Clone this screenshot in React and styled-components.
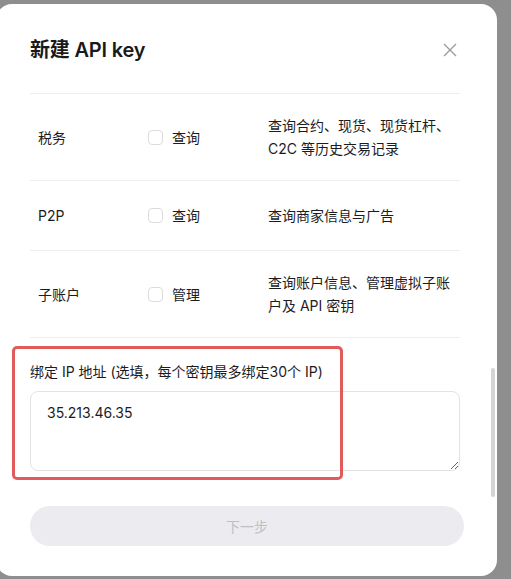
import styled, { createGlobalStyle } from "styled-components";

const GlobalStyle = createGlobalStyle`
  html, body {
    margin: 0;
    padding: 0;
    height: 100%;
    background: #8e8e8e;
    overflow: hidden;
  }
  body {
    font-family: Inter, "Noto Sans CJK SC", sans-serif;
    color: #1c1c1e;
  }
`

const Page = styled.div`
  height: 579px;
  padding-top: 4px;
  box-sizing: border-box;
`

const Modal = styled.div`
  position: relative;
  width: 501px;
  height: 572px;
  margin-left: -4px;
  box-sizing: border-box;
  padding: 0 37px 0 34px;
  background: #fff;
  border-radius: 16px;
`

const Header = styled.div`
  display: flex;
  align-items: center;
  justify-content: space-between;
  padding: 32px 0 29px;
  border-bottom: 1px solid #eeeeee;
`

const Title = styled.h2`
  margin: 0;
  font-size: 20px;
  line-height: 28px;
  font-weight: 600;
  letter-spacing: -0.2px;
  color: #1a1a1a;
`

const Close = styled.button`
  display: flex;
  margin: 0 3px 0 0;
  padding: 0;
  border: none;
  background: none;
  cursor: pointer;
`

const Row = styled.div`
  display: grid;
  grid-template-columns: 110px 120px 190px;
  align-items: center;
  min-height: 70px;
  padding: 20px 0 20px 8px;
  box-sizing: border-box;
  border-bottom: 1px solid #eeeeee;
  font-size: 14px;
  line-height: 23px;
`

const Label = styled.div`
  color: #1c1c1e;
`

const Check = styled.label`
  display: flex;
  align-items: center;
  gap: 9px;
  color: #1c1c1e;
`

const Box = styled.span`
  width: 15px;
  height: 15px;
  box-sizing: border-box;
  border: 1px solid #dcdcdf;
  border-radius: 4px;
  background: #fff;
`

const Desc = styled.div`
  color: #1c1c1e;
`

const IpSection = styled.div`
  position: relative;
  padding-top: 23px;
`

const IpLabel = styled.div`
  font-size: 14px;
  line-height: 22px;
  color: #1c1c1e;
  margin-bottom: 8px;
`

const IpInput = styled.textarea`
  display: block;
  width: 100%;
  height: 80px;
  box-sizing: border-box;
  padding: 11px 16px;
  border: 1px solid #e3e3e6;
  border-radius: 8px;
  font-family: Inter, "Noto Sans CJK SC", sans-serif;
  font-size: 14px;
  line-height: 20px;
  color: #1c1c1e;
  outline: none;
`

const Highlight = styled.div`
  position: absolute;
  left: -18px;
  top: 8px;
  width: 331px;
  height: 134px;
  box-sizing: border-box;
  border: 3px solid #e25b5b;
  border-radius: 5px;
  pointer-events: none;
`

const NextButton = styled.button`
  display: block;
  width: 434px;
  height: 40px;
  margin-top: 35px;
  border: none;
  border-radius: 20px;
  background: #ececf0;
  color: #bfbfc4;
  font-family: Inter, "Noto Sans CJK SC", sans-serif;
  font-size: 14px;
`

const ScrollThumb = styled.div`
  position: absolute;
  right: 2px;
  top: 364px;
  width: 4px;
  height: 129px;
  border-radius: 2px;
  background: #d4d4d6;
`

const permissions = [
  { name: "税务", action: "查询", desc: "查询合约、现货、现货杠杆、C2C 等历史交易记录" },
  { name: "P2P", action: "查询", desc: "查询商家信息与广告" },
  { name: "子账户", action: "管理", desc: "查询账户信息、管理虚拟子账户及 API 密钥" },
];

const App = () => {
  return (
    <Page>
      <GlobalStyle />
      <Modal>
        <Header>
          <Title>新建 API key</Title>
          <Close aria-label="close">
            <svg width="14" height="14" viewBox="0 0 14 14">
              <path d="M1 1L13 13M13 1L1 13" stroke="#9a9a9e" strokeWidth="1.3" fill="none" />
            </svg>
          </Close>
        </Header>

        {permissions.map((p) => (
          <Row key={p.name}>
            <Label>{p.name}</Label>
            <Check>
              <Box />
              {p.action}
            </Check>
            <Desc>{p.desc}</Desc>
          </Row>
        ))}

        <IpSection>
          <IpLabel>绑定 IP 地址 (选填，每个密钥最多绑定30个 IP)</IpLabel>
          <IpInput defaultValue="35.213.46.35" />
          <Highlight />
        </IpSection>

        <NextButton disabled>下一步</NextButton>
        <ScrollThumb />
      </Modal>
    </Page>
  )
}

export default App
